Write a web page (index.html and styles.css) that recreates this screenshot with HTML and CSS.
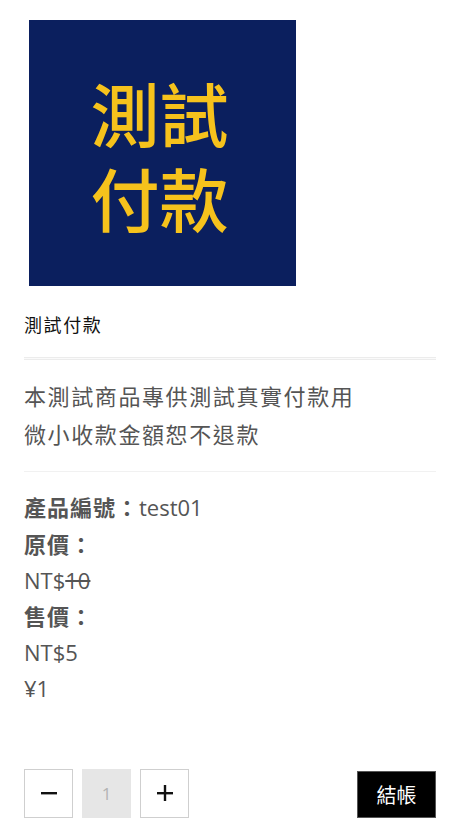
FILE: index.html
```html
<!DOCTYPE html>
<html lang="zh-Hant">
<head>
<meta charset="utf-8">
<link rel="stylesheet" href="styles.css">
</head>
<body>
<div class="page">
  <div class="cover"><div class="cover-text">測試<br>付款</div></div>
  <div class="title">測試付款</div>
  <div class="divider double"></div>
  <div class="desc">本測試商品專供測試真實付款用<br>微小收款金額恕不退款</div>
  <div class="divider"></div>
  <div class="info">
    <div><b>產品編號：</b>test01</div>
    <div><b>原價：</b></div>
    <div>NT$<s>10</s></div>
    <div><b>售價：</b></div>
    <div>NT$5</div>
    <div>¥1</div>
  </div>
  <div class="actions">
    <div class="qty">
      <button class="qbtn" aria-label="minus"><svg width="16" height="16" viewBox="0 0 16 16"><rect x="0" y="7" width="16" height="2.4" fill="#111"/></svg></button>
      <div class="qinput">1</div>
      <button class="qbtn" aria-label="plus"><svg width="16" height="16" viewBox="0 0 16 16"><rect x="0" y="7" width="16" height="2.4" fill="#111"/><rect x="6.8" y="0" width="2.4" height="16" fill="#111"/></svg></button>
    </div>
    <button class="checkout">結帳</button>
  </div>
</div>
</body>
</html>
```
FILE: styles.css
```css
* { box-sizing: border-box; }
body {
  margin: 0;
  background: #fff;
  font-family: "Open Sans", "Noto Sans CJK TC", sans-serif;
}
.page {
  padding: 20px 14px 0 24px;
}
.cover {
  width: 267px;
  height: 266px;
  margin-left: 5px;
  background: #0b1f5e;
  display: flex;
  align-items: center;
  justify-content: center;
  padding-right: 6px;
  padding-top: 4px;
}
.cover-text {
  font-family: "Noto Sans CJK TC", sans-serif;
  color: #f6c21c;
  font-size: 69px;
  font-weight: 500;
  line-height: 85px;
}
.title {
  margin-top: 26px;
  font-family: "Noto Sans CJK TC", sans-serif;
  font-size: 18px;
  letter-spacing: 1.6px;
  line-height: 24px;
  color: #111;
}
.divider {
  height: 1px;
  background: #f1f1f1;
}
.divider.double {
  margin-top: 21px;
  height: 3px;
  background: linear-gradient(#ececec 0 1px, #fafafa 1px 2px, #ececec 2px 3px);
}
.desc {
  padding: 16px 0 19px;
  font-family: "Noto Sans CJK TC", sans-serif;
  font-size: 22px;
  letter-spacing: 1.6px;
  line-height: 38px;
  color: #555;
}
.info {
  padding-top: 17px;
  font-size: 22px;
  line-height: 35.8px;
  color: #555;
}
.info b {
  font-family: "Noto Sans CJK TC", sans-serif;
  font-weight: 700;
  letter-spacing: 1px;
}
.info s {
  text-decoration-thickness: 1.5px;
}
.actions {
  margin-top: 62px;
  display: flex;
  justify-content: space-between;
  align-items: flex-end;
}
.qty {
  display: flex;
  gap: 9px;
}
.qbtn {
  width: 49px;
  height: 49px;
  border: 1px solid #cfcfcf;
  background: #fff;
  display: flex;
  align-items: center;
  justify-content: center;
  padding: 0;
}
.qinput {
  width: 49px;
  height: 49px;
  background: #e6e6e6;
  color: #b3b3b3;
  font-size: 17px;
  display: flex;
  align-items: center;
  justify-content: center;
}
.checkout {
  width: 79px;
  height: 47px;
  border: 1px solid #555;
  background: #000;
  color: #fff;
  font-family: "Noto Sans CJK TC", sans-serif;
  font-size: 20px;
  padding: 0;
}
```
